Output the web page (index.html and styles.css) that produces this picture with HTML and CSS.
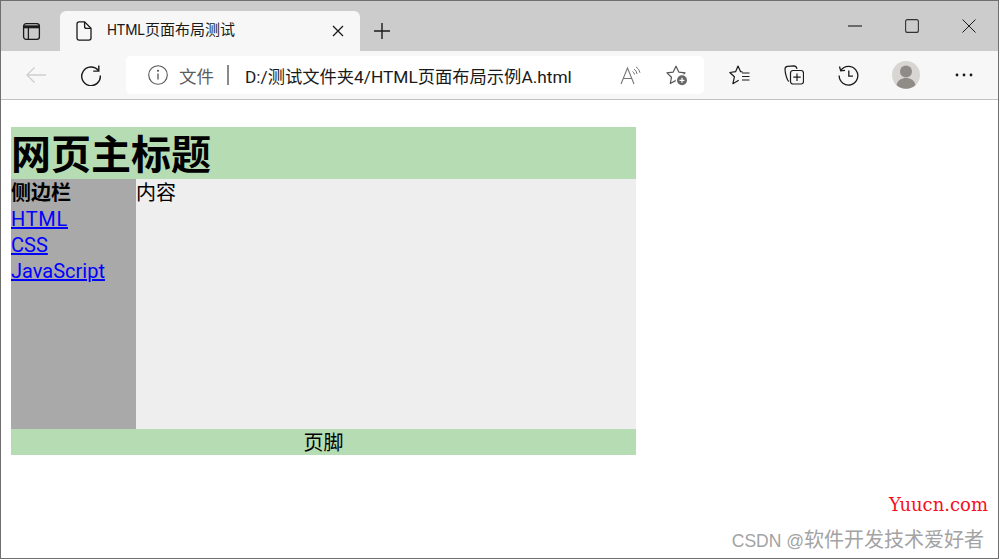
FILE: index.html
```html
<!DOCTYPE html>
<html lang="zh">
<head>
<meta charset="utf-8">
<title>HTML页面布局测试</title>
<link rel="stylesheet" href="styles.css">
</head>
<body>
<div class="window">
  <div class="tabstrip">
    <button class="tab-actions" aria-label="tab actions">
      <svg width="20" height="20" viewBox="0 0 20 20" fill="none" stroke="#1a1a1a" stroke-width="1.3"><rect x="2.600" y="2.600" width="15.800" height="15.800" rx="2.600"/><path d="M3 5.800h15" stroke-width="3"/><path d="M7.400 7v11"/></svg>
    </button>
    <div class="tab">
      <svg class="tab-doc" width="16" height="20" viewBox="0 0 16 20" fill="none" stroke="#1a1a1a" stroke-width="1.3"><path d="M3 .9h5.600L15 7.200v9.900a2 2 0 0 1-2 2H3a2 2 0 0 1-2-2V2.900a2 2 0 0 1 2-2z"/><path d="M8.600 1v4.400a2 2 0 0 0 2 2H15"/></svg>
      <span class="tab-title"><span class="tab-latin">HTML</span>页面布局测试</span>
      <svg class="tab-close" width="12" height="12" viewBox="0 0 12 12" stroke="#1a1a1a" stroke-width="1.3"><path d="M1 1l10 10M11 1L1 11"/></svg>
    </div>
    <svg class="new-tab" width="18" height="18" viewBox="0 0 18 18" stroke="#1a1a1a" stroke-width="1.4"><path d="M9 1v16M1 9h16"/></svg>
    <div class="window-controls">
      <svg width="14" height="14" viewBox="0 0 14 14" stroke="#1a1a1a" stroke-width="1.1"><path d="M0 7h14"/></svg>
      <svg width="14" height="14" viewBox="0 0 14 14" fill="none" stroke="#333" stroke-width="1.1"><rect x=".6" y=".6" width="12.800" height="12.800" rx="2"/></svg>
      <svg width="14" height="14" viewBox="0 0 14 14" stroke="#1a1a1a" stroke-width="1"><path d="M.5.5l13 13M13.500.5l-13 13"/></svg>
    </div>
  </div>
  <div class="toolbar">
    <svg class="back" width="22" height="18" viewBox="0 0 22 18" fill="none" stroke="#cfcfcf" stroke-width="1.4"><path d="M21 9H2M9.500 1.500L2 9l7.500 7.500"/></svg>
    <svg class="reload" width="22" height="22" viewBox="0 0 22 22" fill="none" stroke="#1a1a1a" stroke-width="1.4"><path d="M18.300 6.500A9.300 9.300 0 1 0 20.300 11.500"/><path d="M18.800 1.500v5.600h-5.600"/></svg>
    <div class="address">
      <svg class="info" width="20" height="20" viewBox="0 0 20 20" fill="none" stroke="#555" stroke-width="1.100"><circle cx="10" cy="10" r="9.300"/><path d="M10 8.500v6" stroke-width="1.300"/><circle cx="10" cy="5.800" r=".5" fill="#555"/></svg>
      <span class="file-label">文件</span>
      <span class="divider"></span>
      <span class="url">D:/测试文件夹4/HTML页面布局示例A.html</span>
      <svg class="read-aloud" width="21" height="19" viewBox="0 0 21 19" fill="none" stroke="#777" stroke-width="1.100"><path d="M1 18L7.500 2 14 18M3.300 12.500h8.400"/><path d="M12.500 5.500a4 4 0 0 1 2 3M14 3a7 7 0 0 1 3 5M16 .8a9 9 0 0 1 4 6" stroke-width="1"/></svg>
      <svg class="fav-add" width="22" height="21" viewBox="0 0 22 21" fill="none" stroke="#555" stroke-width="1.200"><path d="M10 1.200l2.800 5.900 6.300.8-4.600 4.300 1.200 6.300-5.700-3.100-5.700 3.100 1.200-6.300L.9 7.900l6.300-.8z" stroke-linejoin="round"/><circle cx="16" cy="15.300" r="6.300" fill="#fff" stroke="none"/><circle cx="16" cy="15.300" r="5" fill="#666" stroke="none"/><path d="M16 12.800v5M13.500 15.300h5" stroke="#fff" stroke-width="1.300"/></svg>
    </div>
    <div class="toolbar-icons">
      <svg class="fav-list" width="21" height="20" viewBox="0 0 21 20" fill="none" stroke="#1a1a1a" stroke-width="1.200" stroke-linejoin="round"><path d="M13.500 6.800l-2-.2L9 1 6.700 6.600.8 7.500l4.600 4.300-1.500 6.900 5.800-3.500"/><path d="M13 8h7.500M13 11.500h7.500M13 15h7.500" stroke-width="1.100"/></svg>
      <svg class="collections" width="20" height="20" viewBox="0 0 20 20" fill="none" stroke="#1a1a1a" stroke-width="1.200"><path d="M5 16.500C3 15.500 1 8 1 4c0-1.500 1-2.500 2.500-2.700L10 .8c1.500 0 2.500 1 3 3"/><rect x="6.500" y="5.500" width="13" height="13.500" rx="2.500"/><path d="M13 8.500v7.500M9.300 12.200h7.400"/></svg>
      <svg class="history" width="21" height="21" viewBox="0 0 21 21" fill="none" stroke="#1a1a1a" stroke-width="1.300"><path d="M2.800 5.500A9.300 9.300 0 1 1 1.200 10.500"/><path d="M1.500 1.500l1.200 4.300 4.300-.5"/><path d="M10.800 5.500v5.700h4.200"/></svg>
      <svg class="avatar" width="28" height="28" viewBox="0 0 28 28"><circle cx="14" cy="14" r="14" fill="#d7d6d3"/><circle cx="14" cy="10.500" r="6" fill="#8f8b87"/><path d="M4.500 24c1-4.500 5-7 9.500-7s8.500 2.500 9.500 7a14 14 0 0 1-19 0z" fill="#8f8b87"/></svg>
      <svg class="more" width="18" height="4" viewBox="0 0 18 4" fill="#1a1a1a"><circle cx="2" cy="2" r="1.400"/><circle cx="9" cy="2" r="1.400"/><circle cx="16" cy="2" r="1.400"/></svg>
    </div>
  </div>
  <main class="viewport">
    <div class="page">
      <h1 class="page-title">网页主标题</h1>
      <div class="page-body">
        <nav class="sidebar">
          <b>侧边栏</b>
          <a class="link-wide" href="#">HTML</a>
          <a href="#">CSS</a>
          <a href="#">JavaScript</a>
        </nav>
        <div class="content">内容</div>
      </div>
      <footer class="page-footer">页脚</footer>
    </div>
  </main>
  <div class="mark-site">Yuucn.com</div>
  <div class="mark-csdn"><span class="mark-latin">CSDN @</span>软件开发技术爱好者</div>
</div>
</body>
</html>
```
FILE: styles.css
```css
* { box-sizing: border-box; }
html, body { margin: 0; padding: 0; }
body { width: 999px; height: 559px; overflow: hidden; background: #fff; }
svg { display: block; flex: none; }

.window {
  position: relative;
  width: 999px;
  height: 559px;
  border: 1px solid #6f6f6f;
  display: flex;
  flex-direction: column;
  font-family: Roboto, "Noto Sans CJK SC", sans-serif;
}

.tabstrip {
  height: 50px;
  flex: none;
  background: #cccccc;
  display: flex;
  align-items: flex-end;
  position: relative;
}
.tab-actions {
  width: 59px;
  height: 40px;
  padding: 0 0 0 20px;
  border: 0;
  background: none;
  display: flex;
  align-items: center;
}
.tab {
  width: 300px;
  height: 40px;
  background: #f7f7f7;
  border-radius: 6px 6px 0 0;
  display: flex;
  align-items: center;
  padding-left: 16px;
}
.tab-title {
  margin-left: 15px;
  width: 225px;
  font-size: 15px;
  line-height: 18px;
  margin-top: -2px;
  color: #1a1a1a;
  white-space: nowrap;
}
.tab-latin { font-size: 14px; }
.new-tab { margin: 0 0 11px 13px; }
.window-controls {
  margin-left: auto;
  align-self: flex-start;
  display: flex;
  gap: 43px;
  margin-top: 18px;
  padding-right: 22px;
}

.toolbar {
  height: 49px;
  flex: none;
  background: #f7f7f7;
  border-bottom: 1px solid #c2c2c2;
  display: flex;
  align-items: center;
}
.back { margin-left: 24px; }
.reload { margin-left: 33px; }
.address {
  flex: none;
  margin-left: 24px;
  width: 578px;
  height: 38px;
  background: #fff;
  border-radius: 5px;
  display: flex;
  align-items: center;
  padding-left: 22px;
}
.file-label { width: 36px; margin-left: 11px; font-size: 17.500px; color: #5c5c5c; white-space: nowrap; }
.divider { flex: none; width: 2px; height: 20px; margin-left: 12px; background: #8a8a8a; }
.url { flex: none; margin-left: 16px; width: 361px; font-size: 17.300px; color: #1a1a1a; white-space: nowrap; }
.read-aloud { margin-left: 14px; }
.fav-add { margin-left: 25px; }
.toolbar-icons {
  display: flex;
  flex: none;
  align-items: center;
  margin-left: 25px;
}
.collections { margin-left: 34px; }
.history { margin-left: 34px; }
.avatar { margin-left: 33px; }
.more { margin-left: 35px; }

.viewport { flex: 1; padding: 27px 10px 0; background: #fff; }
.page { width: 625px; font-size: 20px; line-height: 26px; color: #000; }
.page-title {
  margin: 0;
  height: 52px;
  background: #b6dcb4;
  font-size: 40px;
  line-height: 58px;
  font-weight: 700;
  white-space: nowrap;
}
.page-body { display: flex; height: 250px; }
.sidebar {
  width: 125px;
  padding-top: 1px;
  background: #a9a9a9;
  display: flex;
  flex-direction: column;
  align-items: flex-start;
}
.sidebar b { font-weight: 700; }
.sidebar a { color: #0000ff; text-decoration: underline; }
.sidebar .link-wide { letter-spacing: .7px; }
.content { flex: 1; padding-top: 1px; background: #eeeeee; }
.page-footer { height: 26px; padding-top: 1px; background: #b6dcb4; text-align: center; }

.mark-site {
  position: absolute;
  right: 10px;
  top: 494px;
  font-family: "DejaVu Serif", serif;
  font-size: 18px;
  line-height: 20px;
  color: #f50f1d;
  white-space: nowrap;
}
.mark-csdn {
  position: absolute;
  right: 14px;
  top: 526px;
  font-family: "Liberation Sans", "Noto Sans CJK SC", sans-serif;
  font-size: 20px;
  line-height: 26px;
  color: #a3a3a3;
  white-space: nowrap;
}
.mark-latin { font-size: 17.500px; }
```
